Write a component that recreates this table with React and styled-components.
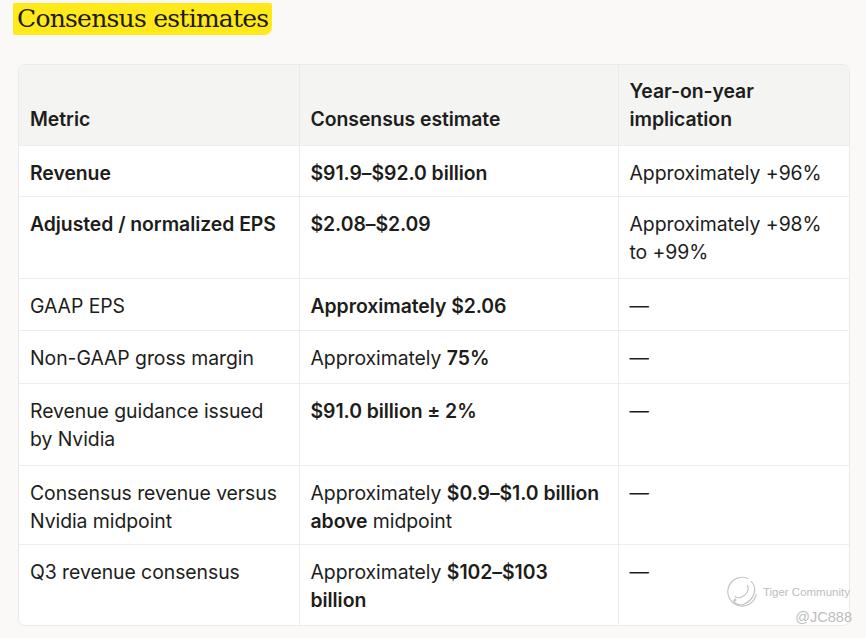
import React from "react";
import styled, { createGlobalStyle } from "styled-components";

const Global = createGlobalStyle`
  html, body { margin: 0; padding: 0; background: #faf9f7; }
  body { font-family: Inter, "Open Sans", sans-serif; color: #1d1d1b; }
`;

const Page = styled.div`
  position: relative;
  width: 866px;
  height: 638px;
  padding: 3px 18px 0 18px;
  box-sizing: border-box;
  overflow: hidden;
`;

const TitleRow = styled.div`
  display: flex;
  margin-left: -5px;
`;

const Title = styled.h2`
  margin: 0;
  font-family: "DejaVu Serif", "Liberation Serif", serif;
  font-weight: 400;
  font-size: 25px;
  line-height: 32px;
  letter-spacing: -0.75px;
  color: #1b1a14;
  background: #ffe91a;
  padding: 0 4px 0 4px;
  border-radius: 1px 2px 8px 3px;
`;

const TableWrap = styled.div`
  margin-top: 29px;
  width: 830px;
  border: 1px solid #ebeae8;
  border-radius: 7px;
  overflow: hidden;
  background: #fff;
`;

const Table = styled.table`
  width: 100%;
  border-collapse: collapse;
  table-layout: fixed;
  font-size: 19.4px;
  line-height: 28px;
  letter-spacing: -0.05px;
`;

const HeadCell = styled.th`
  background: #f4f4f3;
  text-align: left;
  vertical-align: bottom;
  font-weight: 600;
  padding: 12px 11px 12px 11px;
  border-left: ${(p) => (p.$first ? "none" : "1px solid #ebeae8")};
`;

const Cell = styled.td`
  vertical-align: top;
  padding: 13px 11px 9px 11px;
  height: ${(p) => p.$h}px;
  box-sizing: border-box;
  border-top: 1px solid #eeedeb;
  border-left: ${(p) => (p.$first ? "none" : "1px solid #eeedeb")};
`;

const B = styled.b`
  font-weight: 600;
`;

const Mark = styled.div`
  position: absolute;
  right: 16px;
  bottom: 13px;
  display: flex;
  flex-direction: column;
  align-items: flex-end;
  color: #bdbdbd;
  pointer-events: none;
`;

const MarkTop = styled.div`
  display: flex;
  align-items: center;
  gap: 3px;
  font-family: "Liberation Sans", sans-serif;
  font-size: 11.5px;
`;

const Handle = styled.div`
  font-family: "Liberation Sans", sans-serif;
  font-size: 14.5px;
  margin-top: 0px;
  margin-right: -2px;
`;

const rows = [
  { h: 51, c: [<B>Revenue</B>, <B>$91.9–$92.0 billion</B>, "Approximately +96%"] },
  { h: 82, c: [<B>Adjusted / normalized EPS</B>, <B>$2.08–$2.09</B>, "Approximately +98% to +99%"] },
  { h: 52, c: ["GAAP EPS", <B>Approximately $2.06</B>, "—"] },
  { h: 53, c: ["Non-GAAP gross margin", <>Approximately <B>75%</B></>, "—"] },
  { h: 82, c: ["Revenue guidance issued by Nvidia", <B>$91.0 billion ± 2%</B>, "—"] },
  { h: 76, c: ["Consensus revenue versus Nvidia midpoint", <>Approximately <B>$0.9–$1.0 billion above</B> midpoint</>, "—"] },
  { h: 80, c: ["Q3 revenue consensus", <>Approximately <B>$102–$103 billion</B></>, "—"] },
];

export default function App() {
  return (
    <>
      <Global />
      <Page>
        <TitleRow>
          <Title>Consensus estimates</Title>
        </TitleRow>
        <TableWrap>
          <Table>
            <colgroup>
              <col style={{ width: 280 }} />
              <col style={{ width: 319 }} />
              <col />
            </colgroup>
            <thead>
              <tr>
                <HeadCell $first>Metric</HeadCell>
                <HeadCell>Consensus estimate</HeadCell>
                <HeadCell>Year-on-year implication</HeadCell>
              </tr>
            </thead>
            <tbody>
              {rows.map((r, i) => (
                <tr key={i}>
                  {r.c.map((c, j) => (
                    <Cell key={j} $first={j === 0} $h={r.h}>{c}</Cell>
                  ))}
                </tr>
              ))}
            </tbody>
          </Table>
        </TableWrap>
        <Mark>
          <MarkTop>
            <svg width="34" height="34" viewBox="0 0 32 32" fill="none" stroke="#c2c2c2" strokeWidth="1.1">
              <path d="M21 3.5 A13.5 13.5 0 1 0 28.5 18" />
              <path d="M23.5 6 C29.5 11 28 23 16.5 27.5 C12 29 8 27 6.5 24" />
              <path d="M20 9.5 C22.5 14 19 19.5 12.5 21.5" />
              <path d="M8 19.5 C9 21 10.5 21.5 12 21.5" />
              <circle cx="8.5" cy="23.5" r="0.8" />
            </svg>
            <span>Tiger Community</span>
          </MarkTop>
          <Handle>@JC888</Handle>
        </Mark>
      </Page>
    </>
  );
}
